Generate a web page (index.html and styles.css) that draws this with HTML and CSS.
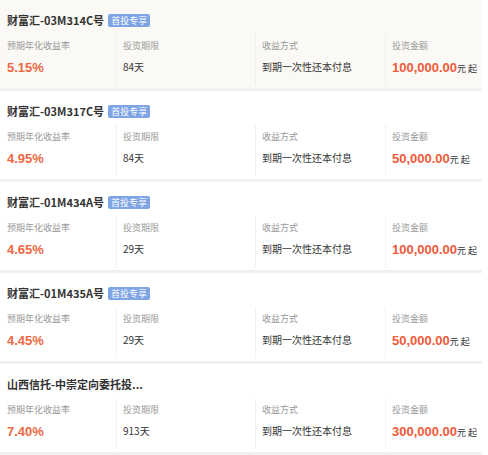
FILE: index.html
```html
<!DOCTYPE html>
<html><head><meta charset="utf-8"><link rel="stylesheet" href="styles.css"></head>
<body>
<div class="list">
  <div class="item active">
    <div class="title">财富汇-03M314C号<span class="badge">首投专享</span></div>
    <div class="cols">
      <div class="col"><div class="lbl">预期年化收益率</div><div class="rate">5.15%</div></div>
      <div class="col"><div class="lbl">投资期限</div><div class="val">84天</div></div>
      <div class="col"><div class="lbl">收益方式</div><div class="val">到期一次性还本付息</div></div>
      <div class="col"><div class="lbl">投资金额</div><div class="amt"><b>100,000.00</b>元 起</div></div>
    </div>
  </div>
  <div class="item">
    <div class="title">财富汇-03M317C号<span class="badge">首投专享</span></div>
    <div class="cols">
      <div class="col"><div class="lbl">预期年化收益率</div><div class="rate">4.95%</div></div>
      <div class="col"><div class="lbl">投资期限</div><div class="val">84天</div></div>
      <div class="col"><div class="lbl">收益方式</div><div class="val">到期一次性还本付息</div></div>
      <div class="col"><div class="lbl">投资金额</div><div class="amt"><b>50,000.00</b>元 起</div></div>
    </div>
  </div>
  <div class="item">
    <div class="title">财富汇-01M434A号<span class="badge">首投专享</span></div>
    <div class="cols">
      <div class="col"><div class="lbl">预期年化收益率</div><div class="rate">4.65%</div></div>
      <div class="col"><div class="lbl">投资期限</div><div class="val">29天</div></div>
      <div class="col"><div class="lbl">收益方式</div><div class="val">到期一次性还本付息</div></div>
      <div class="col"><div class="lbl">投资金额</div><div class="amt"><b>100,000.00</b>元 起</div></div>
    </div>
  </div>
  <div class="item">
    <div class="title">财富汇-01M435A号<span class="badge">首投专享</span></div>
    <div class="cols">
      <div class="col"><div class="lbl">预期年化收益率</div><div class="rate">4.45%</div></div>
      <div class="col"><div class="lbl">投资期限</div><div class="val">29天</div></div>
      <div class="col"><div class="lbl">收益方式</div><div class="val">到期一次性还本付息</div></div>
      <div class="col"><div class="lbl">投资金额</div><div class="amt"><b>50,000.00</b>元 起</div></div>
    </div>
  </div>
  <div class="item">
    <div class="title">山西信托-中崇定向委托投...</div>
    <div class="cols">
      <div class="col"><div class="lbl">预期年化收益率</div><div class="rate">7.40%</div></div>
      <div class="col"><div class="lbl">投资期限</div><div class="val">913天</div></div>
      <div class="col"><div class="lbl">收益方式</div><div class="val">到期一次性还本付息</div></div>
      <div class="col"><div class="lbl">投资金额</div><div class="amt"><b>300,000.00</b>元 起</div></div>
    </div>
  </div>
</div>
</body></html>
```
FILE: styles.css
```css
html, body { margin: 0; padding: 0; background: #fff; }
body { font-family: "Noto Sans CJK SC", "Noto Sans", sans-serif; color: #333; }
.list { width: 482px; }
.item { border-bottom: 3px solid #f0f0f0; padding: 12px 0 0 7px; height: 76px; }
.item.active { background: #fbf9f5; }
.title { font-size: 11px; font-weight: bold; line-height: 16px; height: 16px; color: #333; display: flex; align-items: center; }
.badge { margin-left: 4px; background: #7ea4e4; color: #fff; font-size: 9px; font-weight: normal; line-height: 13px; padding: 0 3px; border-radius: 2px; }
.cols { display: grid; grid-template-columns: 109px 139px 130px 1fr; margin-top: 6px; }
.col { padding-left: 6px; padding-top: 5px; height: 46px; }
.col:first-child { padding-left: 0; }
.col + .col { border-left: 1px dotted #e8e6e2; }
.lbl { font-size: 9px; color: #999; line-height: 13px; }
.val { font-size: 10px; color: #333; margin-top: 8px; line-height: 14px; }
.rate { font-family: "Liberation Sans", Arial, sans-serif; font-size: 13px; font-weight: bold; color: #ee6843; margin-top: 8px; line-height: 16px; }
.amt { font-size: 9px; color: #333; margin-top: 8px; line-height: 16px; }
.amt b { font-family: "Liberation Sans", Arial, sans-serif; font-size: 13px; color: #f05a3b; }
```
